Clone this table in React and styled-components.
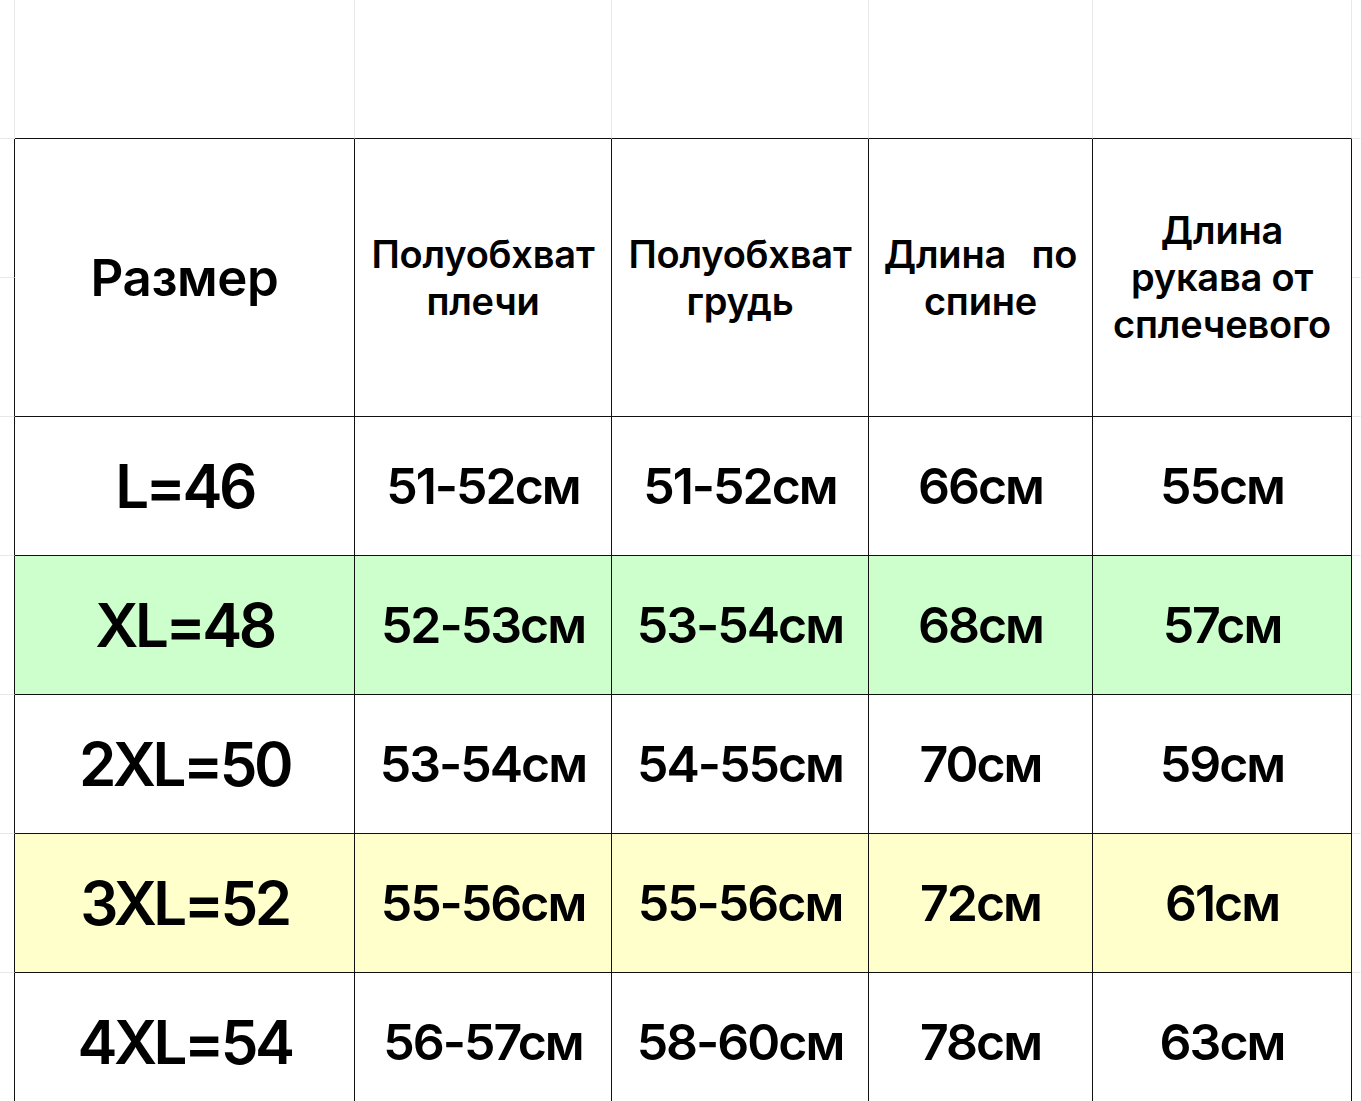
import React from 'react'
import styled, { createGlobalStyle } from 'styled-components'

const GlobalStyle = createGlobalStyle`
  html, body {
    margin: 0;
    padding: 0;
    background: #ffffff;
    overflow: hidden;
  }
  body {
    font-family: Inter, "Noto Sans", Arial, sans-serif;
    color: #000;
  }
`

const FAINT = '#e8e8e8'
const DARK = '#111111'

const Sheet = styled.div`
  display: grid;
  grid-template-columns: 15px 340px 257px 257px 224px 259px 1fr;
  grid-auto-rows: 139px;
  width: 100%;
  height: 1101px;
  overflow: hidden;
`

// every cell only draws its right and bottom edge, like a spreadsheet
const Cell = styled.div`
  box-sizing: border-box;
  display: flex;
  align-items: center;
  justify-content: center;
  text-align: center;
  background: ${(p) => p.$bg || '#fff'};
  border-right: 1px solid ${(p) => (p.$right === 'dark' ? DARK : p.$right === 'none' ? 'transparent' : FAINT)};
  border-bottom: 1px solid ${(p) => (p.$bottom === 'dark' ? DARK : FAINT)};
  grid-row: ${(p) => (p.$span ? `span ${p.$span}` : 'auto')};
`

const SizeText = styled.span`
  font-size: 60px;
  font-weight: 600;
  letter-spacing: -3.5px;
  line-height: 1;
`

const ValueText = styled.span`
  font-size: 50px;
  font-weight: 600;
  letter-spacing: -2px;
  line-height: 1;
`

const TitleText = styled.span`
  font-size: 51px;
  font-weight: 600;
  letter-spacing: -0.4px;
  line-height: 1;
`

const HeadLabel = styled.div`
  display: flex;
  flex-direction: column;
  align-items: center;
  font-size: 38px;
  font-weight: 600;
  letter-spacing: -0.2px;
  line-height: 47px;
`

const Line = styled.span`
  white-space: nowrap;
  word-spacing: ${(p) => p.$spread || 0}px;
`

const columns = [
  { lines: ['Полуобхват', 'плечи'] },
  { lines: ['Полуобхват', 'грудь'] },
  { lines: ['Длина по', 'спине'], spread: 16 },
  { lines: ['Длина', 'рукава от', 'сплечевого'] },
]

const rows = [
  { size: 'L=46', values: ['51-52см', '51-52см', '66см', '55см'] },
  { size: 'XL=48', values: ['52-53см', '53-54см', '68см', '57см'], bg: '#ccffcc' },
  { size: '2XL=50', values: ['53-54см', '54-55см', '70см', '59см'] },
  { size: '3XL=52', values: ['55-56см', '55-56см', '72см', '61см'], bg: '#ffffcc' },
  { size: '4XL=54', values: ['56-57см', '58-60см', '78см', '63см'] },
]

function TopRow() {
  return (
    <>
      <Cell />
      {[0, 1, 2, 3, 4].map((i) => (
        <Cell key={i} $bottom="dark" />
      ))}
      <Cell $right="none" />
    </>
  )
}

function HeaderRow() {
  return (
    <>
      <Cell $right="dark" />
      <Cell $right="dark" $bottom="dark" $span={2}>
        <TitleText>Размер</TitleText>
      </Cell>
      {columns.map((col, i) => (
        <Cell key={i} $right="dark" $bottom="dark" $span={2}>
          <HeadLabel>
            {col.lines.map((l, j) => (
              <Line key={j} $spread={j === 0 ? col.spread : 0}>{l}</Line>
            ))}
          </HeadLabel>
        </Cell>
      ))}
      <Cell $right="none" />
      <Cell $right="dark" />
      <Cell $right="none" />
    </>
  )
}

function SizeRow({ row }) {
  return (
    <>
      <Cell $right="dark" />
      <Cell $right="dark" $bottom="dark" $bg={row.bg}>
        <SizeText>{row.size}</SizeText>
      </Cell>
      {row.values.map((v, i) => (
        <Cell key={i} $right="dark" $bottom="dark" $bg={row.bg}>
          <ValueText>{v}</ValueText>
        </Cell>
      ))}
      <Cell $right="none" />
    </>
  )
}

export default function App() {
  return (
    <>
      <GlobalStyle />
      <Sheet>
        <TopRow />
        <HeaderRow />
        {rows.map((r) => (
          <SizeRow key={r.size} row={r} />
        ))}
      </Sheet>
    </>
  )
}
